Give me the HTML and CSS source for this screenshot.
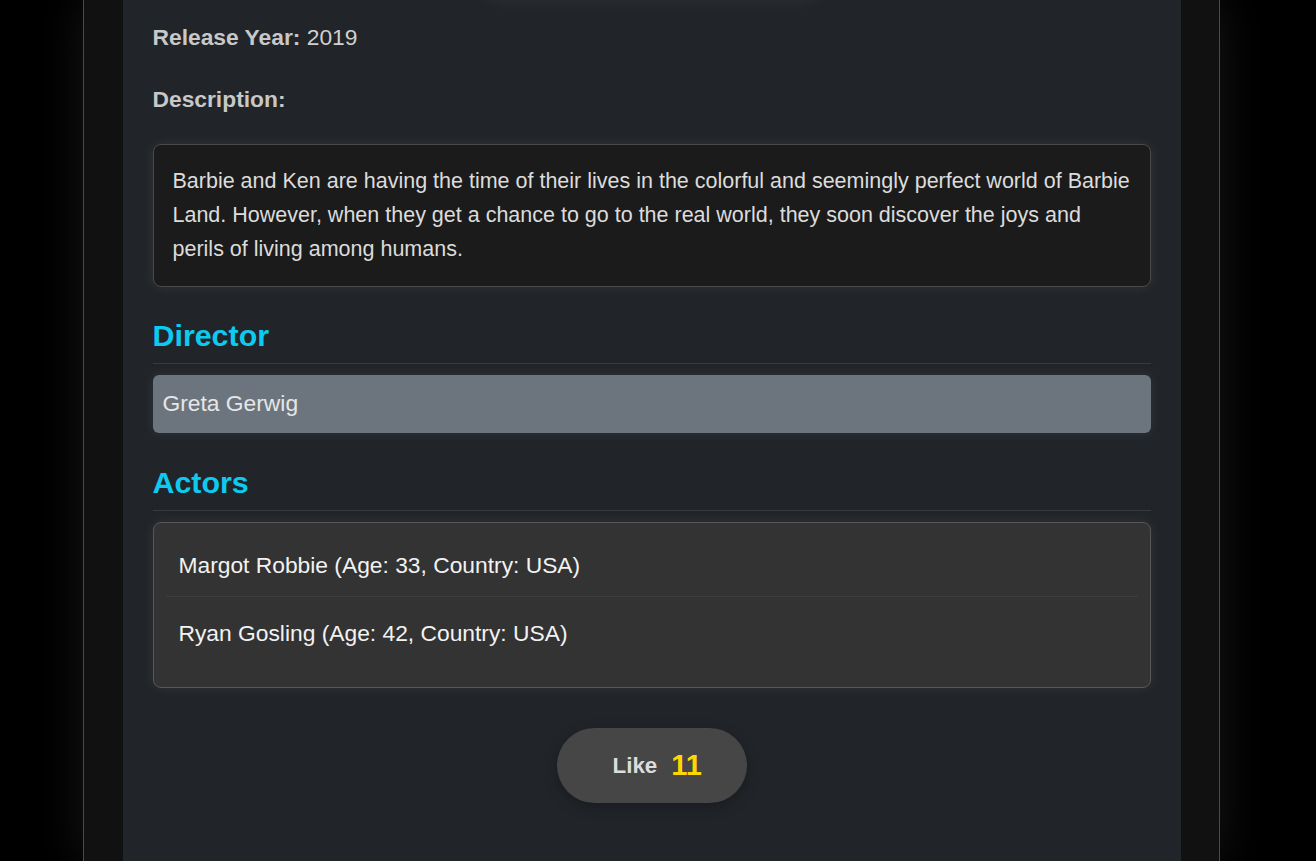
FILE: index.html
```html
<!DOCTYPE html>
<html lang="en">
<head>
<meta charset="utf-8">
<title>Barbie</title>
<link rel="stylesheet" href="styles.css">
</head>
<body>
<div class="viewport">
  <div class="frame">
    <main class="card">
      <div class="poster"></div>
      <p class="meta"><strong>Release Year:</strong> 2019</p>
      <p class="meta label"><strong>Description:</strong></p>
      <div class="description">
        Barbie and Ken are having the time of their lives in the colorful and seemingly perfect world of Barbie Land. However, when they get a chance to go to the real world, they soon discover the joys and perils of living among humans.
      </div>

      <h2 class="section-title">Director</h2>
      <div class="director">Greta Gerwig</div>

      <h2 class="section-title">Actors</h2>
      <ul class="actors">
        <li class="actor">Margot Robbie (Age: 33, Country: USA)</li>
        <li class="actor">Ryan Gosling (Age: 42, Country: USA)</li>
      </ul>

      <div class="like-row">
        <button class="like-btn"><span class="like-label">Like</span><span class="like-count">11</span></button>
      </div>
    </main>
  </div>
</div>
</body>
</html>
```
FILE: styles.css
```css
html, body {
  margin: 0;
  padding: 0;
  background: #000;
  height: 100%;
  overflow: hidden;
}

body {
  font-family: "Liberation Sans", Arial, sans-serif;
}

.viewport {
  width: 1303px;
  height: 100%;
}

.frame {
  width: 1135px;
  margin: 0 auto;
  height: 100%;
  background: #111;
  border-left: 1px solid #4a4a4a;
  border-right: 1px solid #4a4a4a;
  box-shadow: 0 0 45px rgba(255, 255, 255, 0.09);
  display: flex;
  justify-content: center;
}

.card {
  width: 998px;
  height: 100%;
  background: #212429;
  padding: 0 30px;
  overflow: hidden;
}

.poster {
  width: 330px;
  height: 440px;
  margin: -452px auto 0;
  background: #2a2d31;
  border-radius: 8px;
  box-shadow: 0 4px 24px rgba(255, 255, 255, 0.13);
}

.meta {
  margin: 36px 0 0;
  font-size: 22.8px;
  line-height: 26px;
  color: #d0d0d0;
}

.meta.label {
  margin-top: 36px;
}

.meta strong {
  font-weight: bold;
  color: #c8c8c8;
}

.description {
  margin-top: 32px;
  background: #1b1b1b;
  border: 1px solid #4a4a4a;
  border-radius: 8px;
  padding: 19px 19px 20px;
  font-size: 21.5px;
  line-height: 34px;
  color: #dcdcdc;
  box-shadow: 0 0 14px rgba(255, 255, 255, 0.07);
}

.section-title {
  margin: 31px 0 0;
  padding-bottom: 10px;
  border-bottom: 1px solid #373a3f;
  font-size: 30.4px;
  line-height: 35px;
  font-weight: bold;
  color: #0dcaf0;
}

.director {
  margin-top: 11px;
  background: #6c757d;
  border-radius: 6px;
  padding: 15px 10px 17px;
  font-size: 22.8px;
  line-height: 26px;
  color: #e6e6e6;
  box-shadow: 0 0 14px rgba(255, 255, 255, 0.07);
}

.director + .section-title {
  margin-top: 32px;
}

.actors {
  list-style: none;
  margin: 11px 0 0;
  padding: 11px 12px 17px;
  background: #333;
  border: 1px solid #575757;
  border-radius: 8px;
  box-shadow: 0 0 14px rgba(255, 255, 255, 0.07);
}

.actor {
  padding: 18px 13px;
  margin-bottom: 5px;
  font-size: 22.8px;
  line-height: 26px;
  color: #f2f2f2;
  border-bottom: 1px solid #3e3e3e;
}

.actor:last-child {
  border-bottom: 1px solid transparent;
}

.like-row {
  display: flex;
  justify-content: center;
  margin-top: 40px;
}

.like-btn {
  display: flex;
  align-items: center;
  gap: 14px;
  box-sizing: border-box;
  width: 190px;
  height: 75px;
  padding: 0 0 0 56px;
  border: none;
  border-radius: 38px;
  background: #464646;
  box-shadow: 0 4px 14px rgba(0, 0, 0, 0.25);
  font-family: "Liberation Sans", Arial, sans-serif;
  cursor: pointer;
}

.like-label {
  font-size: 22.4px;
  font-weight: bold;
  color: #dcdcdc;
}

.like-count {
  font-size: 29px;
  font-weight: bold;
  color: #ffd700;
}
```
